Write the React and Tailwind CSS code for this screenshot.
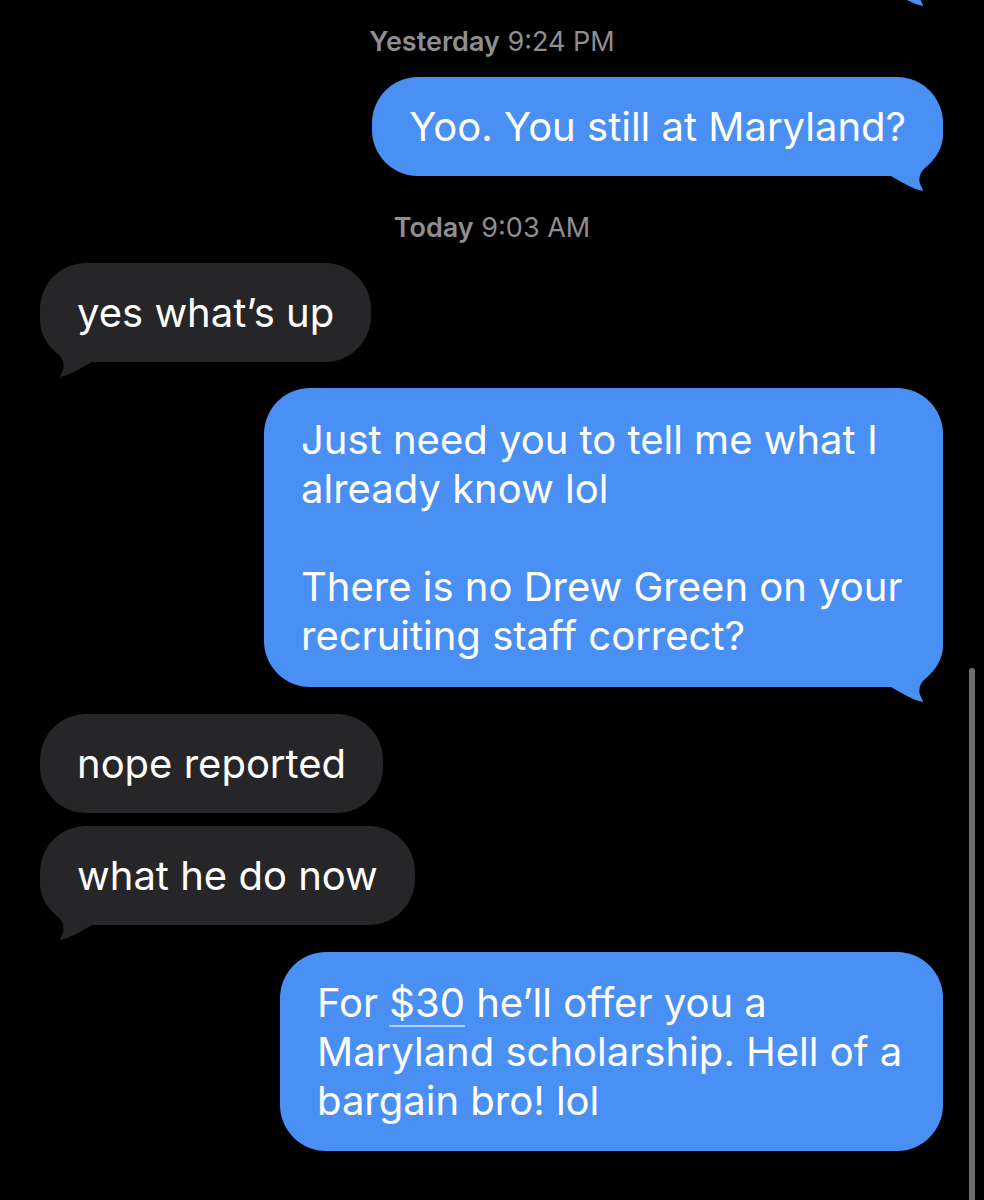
const BLUE = 'bg-[#4a8ff4]'

function Tail({ color, side }) {
  return (
    <svg
      width="60"
      height="66"
      viewBox="0 0 60 66"
      className={`absolute bottom-[-16px] ${side === 'right' ? 'right-0' : 'left-0 -scale-x-100'}`}
    >
      <path
        d="M0 0 H60 V9 C60 22 52 34 42 42 C36 47 35 55 38 60 C39 62 40 64 40 65 C30 63 18 56 8 50 L0 50 Z"
        fill={color}
      />
    </svg>
  )
}

function Stamp({ day, time, className }) {
  return (
    <div className={`text-center text-[27px] leading-[30px] text-[#8e8e93] ${className}`}>
      <span className="font-semibold">{day}</span> {time}
    </div>
  )
}

function Sent({ children, tail, width, pad = 'py-[25px]', className }) {
  return (
    <div className={`flex justify-end pr-[41px] ${className}`}>
      <div className={`relative rounded-[46px] ${BLUE} px-[37px] ${pad} text-white ${width}`}>
        <div className="relative z-10">{children}</div>
        {tail && <Tail color="#4a8ff4" side="right" />}
      </div>
    </div>
  )
}

function Received({ children, tail, className }) {
  return (
    <div className={`flex justify-start pl-[40px] ${className}`}>
      <div className="relative rounded-[46px] bg-[#262628] px-[37px] py-[25px] text-white">
        <div className="relative z-10 whitespace-nowrap">{children}</div>
        {tail && <Tail color="#262628" side="left" />}
      </div>
    </div>
  )
}

export default function App() {
  return (
    <div
      className="relative h-[1200px] w-[984px] overflow-hidden bg-black text-[40px] leading-[49px]"
      style={{ fontFamily: 'Inter, "Noto Sans", sans-serif' }}
    >
      {/* bubble from earlier, only its tail shows */}
      <div className="mt-[-108px] flex justify-end pr-[41px]">
        <div className={`relative h-[99px] w-[400px] rounded-[46px] ${BLUE}`}>
          <Tail color="#4a8ff4" side="right" />
        </div>
      </div>

      <Stamp day="Yesterday" time="9:24 PM" className="mt-[36px]" />

      <Sent tail className="mt-[20px]">
        <span className="whitespace-nowrap">Yoo. You still at Maryland?</span>
      </Sent>

      <Stamp day="Today" time="9:03 AM" className="mt-[37px]" />

      <Received tail className="mt-[20px]">yes what’s up</Received>

      <Sent tail width="w-[679px]" pad="py-[27px]" className="mt-[26px]">
        <p className="whitespace-nowrap">Just need you to tell me what I<br />already know lol</p>
        <p className="mt-[49px] whitespace-nowrap">There is no Drew Green on your<br />recruiting staff correct?</p>
      </Sent>

      <Received className="mt-[27px]">nope reported</Received>
      <Received tail className="mt-[13px]">what he do now</Received>

      <Sent width="w-[663px]" pad="py-[26px]" className="mt-[27px]">
        <p className="whitespace-nowrap">
          For{' '}
          <span className="underline decoration-white/60 decoration-2 underline-offset-[8px]">$30</span>{' '}
          he’ll offer you a<br />Maryland scholarship. Hell of a<br />bargain bro! lol
        </p>
      </Sent>

      <div className="absolute right-[9px] top-[668px] h-[560px] w-[6px] rounded-full bg-[#6f6f6f]" />
    </div>
  )
}
